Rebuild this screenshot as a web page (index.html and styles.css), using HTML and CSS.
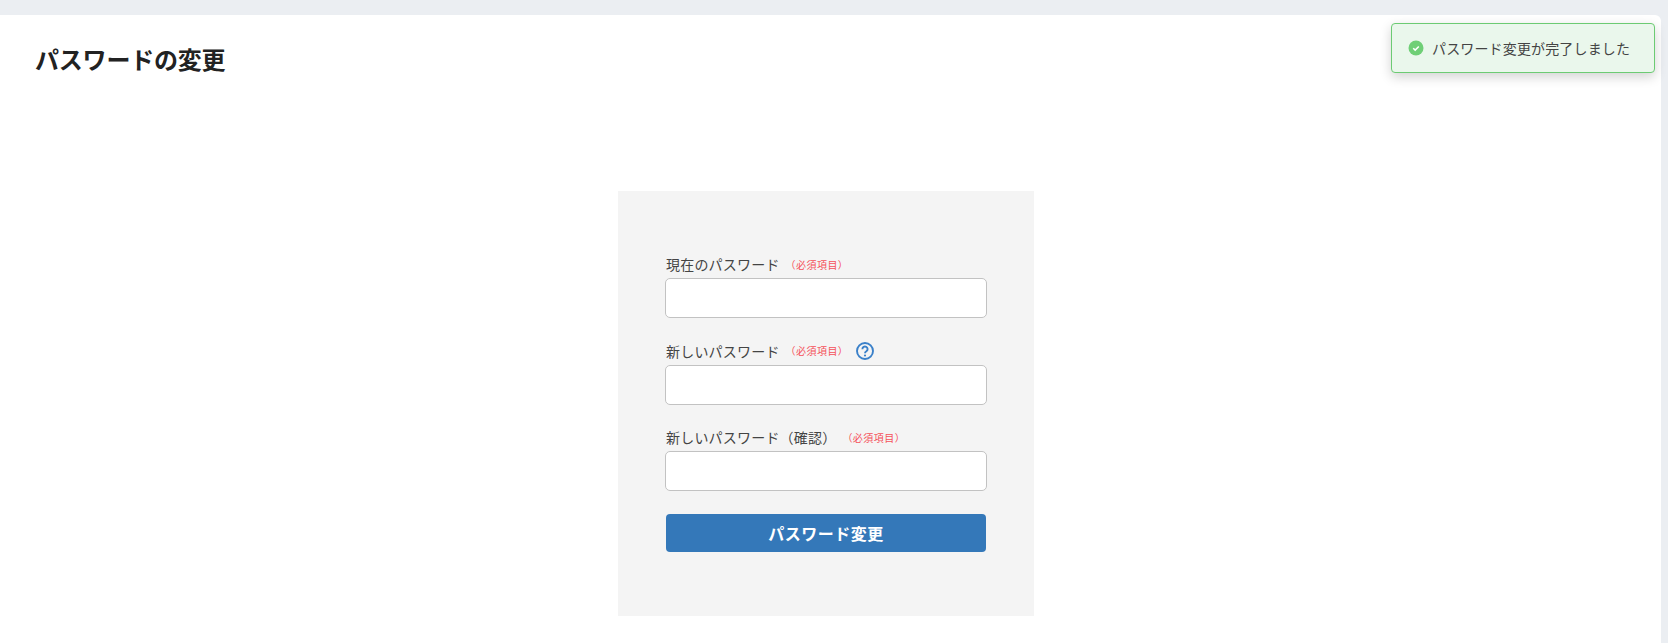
FILE: index.html
```html
<!DOCTYPE html>
<html lang="ja">
<head>
    <meta charset="UTF-8">
    <meta name="viewport" content="width=device-width, initial-scale=1.0">
    <title>パスワードの変更</title>
    <link rel="stylesheet" href="styles.css">
</head>
<body>

<main class="page">
    <h1 class="page-title">パスワードの変更</h1>

    <form class="password-form">
        <div class="field">
            <div class="field-label">
                <label for="currentPassword">現在のパスワード</label>
                <span class="required">（必須項目）</span>
            </div>
            <input type="password" id="currentPassword">
        </div>
        <div class="field">
            <div class="field-label">
                <label for="newPassword">新しいパスワード</label>
                <span class="required">（必須項目）</span>
                <svg class="help-icon" width="18" height="18" viewBox="0 0 18 18" aria-hidden="true">
                    <circle cx="9" cy="9" r="8" fill="none" stroke="#3a80c9" stroke-width="1.9"/>
                    <path d="M6.4 7.2a2.6 2.6 0 1 1 4 2.1c-.9.6-1.4 1-1.4 1.9" fill="none" stroke="#3a80c9" stroke-width="1.9"/>
                    <circle cx="9" cy="13.5" r="1.1" fill="#3a80c9"/>
                </svg>
            </div>
            <input type="password" id="newPassword">
        </div>
        <div class="field">
            <div class="field-label">
                <label for="confirmPassword">新しいパスワード（確認）</label>
                <span class="required">（必須項目）</span>
            </div>
            <input type="password" id="confirmPassword">
        </div>
        <button type="button" class="submit-button">パスワード変更</button>
    </form>
</main>

<!-- Toast -->
<div class="toast">
    <svg class="toast-icon" width="16" height="16" viewBox="0 0 16 16" aria-hidden="true">
        <circle cx="8" cy="8" r="7.5" fill="#6fcf76"/>
        <path d="M5.2 8.2l2 1.9 3.6-3.6" fill="none" stroke="#fff" stroke-width="1.5"/>
    </svg>
    <span>パスワード変更が完了しました</span>
</div>

</body>
</html>
```

FILE: styles.css
```css
html, body {
    height: 100%;
}
body {
    font-family: "Noto Sans CJK JP", "Noto Sans", sans-serif;
    margin: 0;
    padding: 15px 7px 0 0;
    box-sizing: border-box;
    background-color: #ebeef2;
    color: #333;
    overflow: hidden;
}
.page {
    height: 100%;
    background-color: white;
    border-top-right-radius: 6px;
    padding: 26px 36px 0 35px;
    box-sizing: border-box;
}
.page-title {
    font-size: 24px;
    line-height: 36px;
    font-weight: 700;
    letter-spacing: -0.2px;
    color: #222;
    margin: 0;
}
.password-form {
    width: 416px;
    height: 425px;
    box-sizing: border-box;
    margin: 114px 0 0 583px;
    padding: 63px 47px 0;
    background-color: #f4f4f4;
}
.field {
    margin-bottom: 22.5px;
}
.field-label {
    display: flex;
    align-items: center;
    height: 24px;
    box-sizing: border-box;
    padding: 0 0 4px 1px;
    font-size: 14px;
    letter-spacing: 0.2px;
    color: #444;
}
.required {
    font-size: 10px;
    letter-spacing: 0.45px;
    color: #f4515a;
    margin-left: 6px;
}
.help-icon {
    margin-left: 8px;
}
input {
    display: block;
    width: 322px;
    height: 40px;
    box-sizing: border-box;
    border: 1px solid #c2c2c2;
    border-radius: 5px;
    background-color: white;
}
.submit-button {
    display: block;
    width: 320px;
    height: 38px;
    margin: 0.5px 0 0 1px;
    background-color: #3478b9;
    color: white;
    border: none;
    border-radius: 4px;
    font-family: inherit;
    font-size: 16px;
    letter-spacing: 0.5px;
    font-weight: 700;
}
.toast {
    position: absolute;
    top: 23px;
    left: 1391px;
    width: 264px;
    height: 50px;
    box-sizing: border-box;
    display: flex;
    align-items: center;
    gap: 8px;
    padding-left: 16px;
    background-color: #eaf7ec;
    border: 1px solid #6ccb73;
    border-radius: 4px;
    box-shadow: 0 4px 12px rgba(0, 0, 0, 0.18);
    font-size: 14px;
    letter-spacing: 0.15px;
    color: #444;
}
```
